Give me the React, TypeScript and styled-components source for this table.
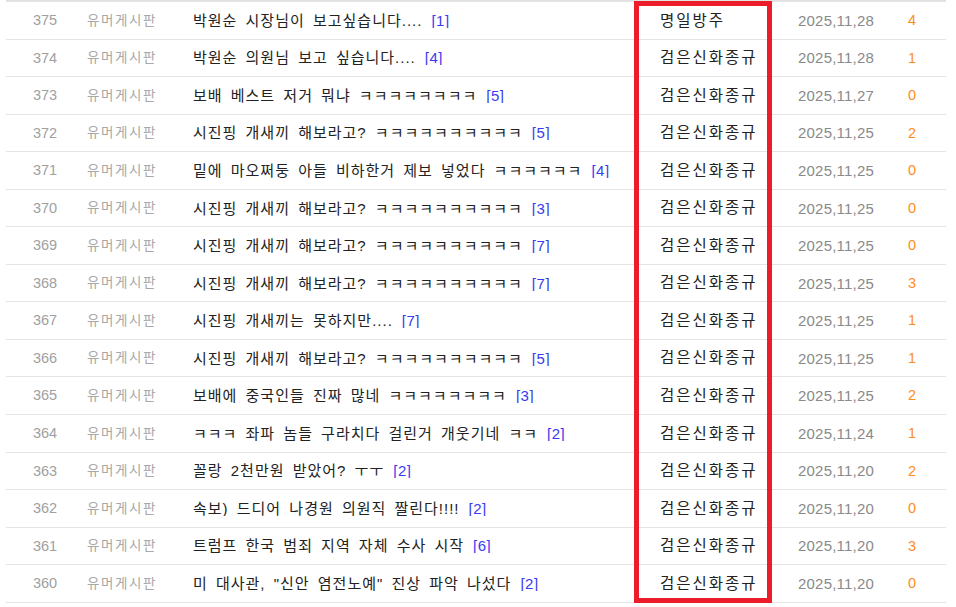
import React from "react";
import styled, { createGlobalStyle } from "styled-components";

const Global = createGlobalStyle`
  html, body { margin: 0; padding: 0; background: #ffffff; }
  body { font-family: "Liberation Sans", "Noto Sans CJK KR", sans-serif; }
`;

type Post = {
  no: number;
  title: string;
  comments: number;
  author: string;
  date: string;
  views: number;
};

const posts: Post[] = [
  { no: 375, title: "박원순 시장님이 보고싶습니다....", comments: 1, author: "명일방주", date: "2025,11,28", views: 4 },
  { no: 374, title: "박원순 의원님 보고 싶습니다....", comments: 4, author: "검은신화종규", date: "2025,11,28", views: 1 },
  { no: 373, title: "보배 베스트 저거 뭐냐 ㅋㅋㅋㅋㅋㅋㅋㅋ", comments: 5, author: "검은신화종규", date: "2025,11,27", views: 0 },
  { no: 372, title: "시진핑 개새끼 해보라고? ㅋㅋㅋㅋㅋㅋㅋㅋㅋㅋ", comments: 5, author: "검은신화종규", date: "2025,11,25", views: 2 },
  { no: 371, title: "밑에 마오쩌둥 아들 비하한거 제보 넣었다 ㅋㅋㅋㅋㅋㅋ", comments: 4, author: "검은신화종규", date: "2025,11,25", views: 0 },
  { no: 370, title: "시진핑 개새끼 해보라고? ㅋㅋㅋㅋㅋㅋㅋㅋㅋㅋ", comments: 3, author: "검은신화종규", date: "2025,11,25", views: 0 },
  { no: 369, title: "시진핑 개새끼 해보라고? ㅋㅋㅋㅋㅋㅋㅋㅋㅋㅋ", comments: 7, author: "검은신화종규", date: "2025,11,25", views: 0 },
  { no: 368, title: "시진핑 개새끼 해보라고? ㅋㅋㅋㅋㅋㅋㅋㅋㅋㅋ", comments: 7, author: "검은신화종규", date: "2025,11,25", views: 3 },
  { no: 367, title: "시진핑 개새끼는 못하지만....", comments: 7, author: "검은신화종규", date: "2025,11,25", views: 1 },
  { no: 366, title: "시진핑 개새끼 해보라고? ㅋㅋㅋㅋㅋㅋㅋㅋㅋㅋ", comments: 5, author: "검은신화종규", date: "2025,11,25", views: 1 },
  { no: 365, title: "보배에 중국인들 진짜 많네 ㅋㅋㅋㅋㅋㅋㅋㅋ", comments: 3, author: "검은신화종규", date: "2025,11,25", views: 2 },
  { no: 364, title: "ㅋㅋㅋ 좌파 놈들 구라치다 걸린거 개웃기네 ㅋㅋ", comments: 2, author: "검은신화종규", date: "2025,11,24", views: 1 },
  { no: 363, title: "꼴랑 2천만원 받았어? ㅜㅜ", comments: 2, author: "검은신화종규", date: "2025,11,20", views: 2 },
  { no: 362, title: "속보) 드디어 나경원 의원직 짤린다!!!!", comments: 2, author: "검은신화종규", date: "2025,11,20", views: 0 },
  { no: 361, title: "트럼프 한국 범죄 지역 자체 수사 시작", comments: 6, author: "검은신화종규", date: "2025,11,20", views: 3 },
  { no: 360, title: "미 대사관, \"신안 염전노예\" 진상 파악 나섰다", comments: 2, author: "검은신화종규", date: "2025,11,20", views: 0 },
];

const Page = styled.div`
  position: relative;
  padding: 0 10px 0 6px;
`;

const Board = styled.div`
  width: 940px;
  border-top: 2px solid #e2e2e2;
`;

const Row = styled.div`
  display: grid;
  grid-template-columns: 78px 76px 480px 132px 128px 46px;
  height: 37.56px;
  box-sizing: border-box;
  border-bottom: 1px solid #e4e4e4;
  align-items: center;
`;

const Cell = styled.div<{ $align?: "left" | "center"; $pad?: number }>`
  text-align: ${(p) => p.$align ?? "center"};
  padding-left: ${(p) => p.$pad ?? 0}px;
  white-space: nowrap;
  overflow: hidden;
  line-height: 1;
`;

const Num = styled(Cell)`
  font-size: 14.5px;
  color: #a0a0a0;
`;

const Category = styled(Cell)`
  font-size: 13.5px;
  letter-spacing: 1.6px;
  color: #a8a8a8;
`;

const Title = styled(Cell)`
  font-size: 15px;
  letter-spacing: 1px;
  word-spacing: 3px;
  color: #222222;
`;

const CommentCount = styled.span`
  color: #3a3af0;
  letter-spacing: 0.5px;
  margin-left: 9px;
`;

const Author = styled(Cell)`
  font-size: 15.5px;
  letter-spacing: 2px;
  color: #222222;
`;

const DateCell = styled(Cell)`
  font-size: 15px;
  letter-spacing: 0.2px;
  color: #8a8a8a;
`;

const Views = styled(Cell)`
  font-size: 14.5px;
  color: #ff8c1a;
`;

const Highlight = styled.div`
  position: absolute;
  left: 634px;
  top: 1px;
  width: 138px;
  height: 602px;
  box-sizing: border-box;
  border: 5px solid #ec1c2a;
  pointer-events: none;
`;

export default function App() {
  return (
    <>
      <Global />
      <Page>
        <Board>
          {posts.map((p) => (
            <Row key={p.no}>
              <Num>{p.no}</Num>
              <Category>유머게시판</Category>
              <Title $align="left" $pad={33}>
                {p.title}
                <CommentCount>[{p.comments}]</CommentCount>
              </Title>
              <Author $align="left" $pad={20}>{p.author}</Author>
              <DateCell>{p.date}</DateCell>
              <Views $align="left" $pad={8}>{p.views}</Views>
            </Row>
          ))}
        </Board>
        <Highlight />
      </Page>
    </>
  );
}
